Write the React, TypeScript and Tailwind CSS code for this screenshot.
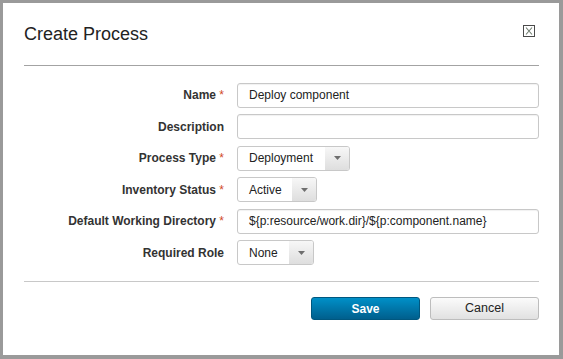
import React from "react";

const font = { fontFamily: '"Liberation Sans", Arial, sans-serif' };

function Label({ text, req }: { text: string; req?: boolean }) {
  return (
    <div className="w-[200px] text-right text-[12px] font-bold text-[#333]">
      {text}
      {req && <span className="font-normal text-[#d1491f]"> *</span>}
    </div>
  );
}

function TextInput({ value }: { value: string }) {
  return (
    <div className="flex-1 h-[25px] rounded-[3px] border border-[#c8c8c8] bg-white shadow-[inset_0_1px_1px_rgba(0,0,0,0.06)] flex items-center pl-[11px] text-[12px] text-[#222]">
      {value}
    </div>
  );
}

function Select({ value, width }: { value: string; width: string }) {
  return (
    <div className={`${width} h-[25px] rounded-[3px] border border-[#c8c8c8] bg-white flex overflow-hidden`}>
      <div className="flex-1 flex items-center pl-[11px] text-[12px] text-[#222]">{value}</div>
      <div className="w-[24px] h-full bg-gradient-to-b from-[#f7f7f7] to-[#dedede] flex items-center justify-center">
        <svg width="7" height="4" viewBox="0 0 7 4">
          <path d="M0 0 H7 L3.5 4 Z" fill="#6e6e6e" />
        </svg>
      </div>
    </div>
  );
}

function Row({ children }: { children: React.ReactNode }) {
  return <div className="flex items-center gap-[13px] h-[25px]">{children}</div>;
}

export default function App() {
  return (
    <div style={font} className="w-[563px] h-[359px] bg-[#9a9a9a] pt-[3px] pl-[3px] pr-[4px] pb-[4px]">
      <div className="bg-white h-full pl-[21px] pr-[20px] pt-[21px]">
        <div className="flex items-start justify-between h-[41px]">
          <div className="text-[18px] leading-[21px] text-[#222]">Create Process</div>
          <svg width="12" height="12" viewBox="0 0 12 12" className="mt-[1px] mr-[4px]">
            <rect x="0.5" y="0.5" width="11" height="11" fill="none" stroke="#4a4a4a" />
            <path d="M3 2.5 L9 9.5 M9 2.5 L3 9.5" stroke="#6f7c6f" strokeWidth="1.1" />
          </svg>
        </div>
        <div className="h-px bg-[#a3a3a3]" />
        <div className="flex flex-col gap-[6.5px] pt-[16.5px]">
          <Row>
            <Label text="Name" req />
            <TextInput value="Deploy component" />
          </Row>
          <Row>
            <Label text="Description" />
            <TextInput value="" />
          </Row>
          <Row>
            <Label text="Process Type" req />
            <Select value="Deployment" width="w-[113px]" />
          </Row>
          <Row>
            <Label text="Inventory Status" req />
            <Select value="Active" width="w-[80px]" />
          </Row>
          <Row>
            <Label text="Default Working Directory" req />
            <TextInput value="${p:resource/work.dir}/${p:component.name}" />
          </Row>
          <Row>
            <Label text="Required Role" />
            <Select value="None" width="w-[77px]" />
          </Row>
        </div>
        <div className="h-px bg-[#c8c8c8] mt-[16px]" />
        <div className="flex justify-end gap-[10px] pt-[15px]">
          <button className="w-[109px] h-[23px] rounded-[3px] border border-[#00577f] bg-gradient-to-b from-[#0090c8] to-[#005f8d] text-white text-[12px] font-bold">
            Save
          </button>
          <button className="w-[109px] h-[23px] rounded-[3px] border border-[#bdbdbd] bg-gradient-to-b from-[#fbfbfb] to-[#e1e1e1] text-[#222] text-[12.5px]">
            Cancel
          </button>
        </div>
      </div>
    </div>
  );
}
